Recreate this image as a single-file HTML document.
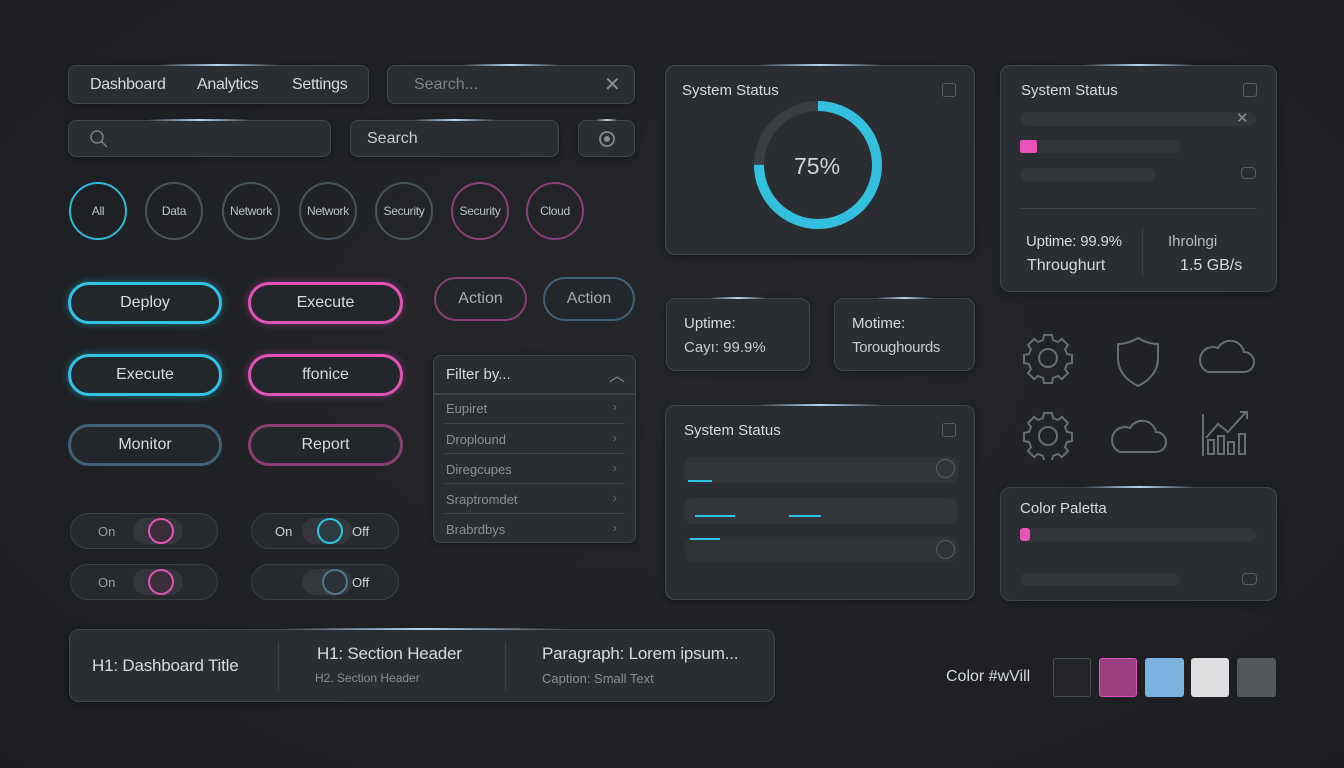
<!DOCTYPE html>
<html><head><meta charset="utf-8"><style>
*{box-sizing:border-box;margin:0;padding:0}
body{width:1344px;height:768px;background:radial-gradient(ellipse at 50% 45%,#25272b 0%,#1f2124 60%,#1b1d20 100%);font-family:"Liberation Sans",sans-serif;color:#d8dade;position:relative;overflow:hidden}
.a{position:absolute}
.p{position:absolute;background:#2a2d31;border:1.5px solid #42464c;border-radius:10px;box-shadow:0 2px 8px rgba(0,0,0,.35)}
.p::before{content:"";position:absolute;top:-2px;left:30%;width:40%;height:2px;background:linear-gradient(90deg,transparent,#b8d4ee,transparent);border-radius:2px}
.t{position:absolute;white-space:nowrap}
.c{position:absolute;width:58px;height:58px;border-radius:50%;border:2px solid #4a545c;display:flex;align-items:center;justify-content:center;font-size:12px;color:#bfc3c8;letter-spacing:-.3px}
.b{position:absolute;border-radius:22px;border:3px solid;display:flex;align-items:center;justify-content:center;font-size:16px;color:#d8dade;background:#23262b}
.cy{border-color:#2fc4e4;box-shadow:0 0 8px rgba(47,196,228,.45)}
.pk{border-color:#e053b9;box-shadow:0 0 8px rgba(224,83,185,.4)}
.dcy{border-color:#3f6277}
.dpk{border-color:#8a3f74}
.tg{position:absolute;width:148px;height:36px;border-radius:18px;background:#26292d;border:1.5px solid #3b3f44}
.bar{position:absolute;background:#32353a;border-radius:8px}
.row{position:absolute;left:10px;width:181px;height:30px;border-top:1px solid #3d4046;font-size:13px;color:#8c9096;padding:8px 0 0 2px}
.row span{position:absolute;right:8px;top:6px;color:#6c7076}
</style></head><body>

<!-- nav -->
<div class="p" style="left:68px;top:65px;width:301px;height:39px;border-radius:8px"></div>
<div class="t" style="left:90px;top:76px;font-size:16px;letter-spacing:-.3px">Dashboard</div>
<div class="t" style="left:197px;top:76px;font-size:16px;letter-spacing:-.3px">Analytics</div>
<div class="t" style="left:292px;top:76px;font-size:16px;letter-spacing:-.3px">Settings</div>
<div class="p" style="left:387px;top:65px;width:248px;height:39px;border-radius:8px"></div>
<div class="t" style="left:414px;top:76px;font-size:16px;color:#7e8288">Search...</div>
<div class="t" style="left:604px;top:72px;font-size:20px;color:#8a8e94">✕</div>

<div class="p" style="left:68px;top:120px;width:263px;height:37px;border-radius:8px"></div>
<svg class="a" style="left:89px;top:129px" width="20" height="20"><circle cx="8" cy="8" r="6" fill="none" stroke="#7a7e84" stroke-width="1.5"/><line x1="12.5" y1="12.5" x2="18" y2="18" stroke="#7a7e84" stroke-width="1.5"/></svg>
<div class="p" style="left:350px;top:120px;width:209px;height:37px;border-radius:8px"></div>
<div class="t" style="left:367px;top:130px;font-size:16px;color:#c8cbd0">Search</div>
<div class="p" style="left:578px;top:120px;width:57px;height:37px;border-radius:8px"></div>
<svg class="a" style="left:597px;top:129px" width="20" height="20"><circle cx="10" cy="10" r="7" fill="none" stroke="#868a90" stroke-width="1.8"/><circle cx="10" cy="10" r="3" fill="#868a90"/></svg>

<!-- circles -->
<div class="c" style="left:69px;top:182px;border-color:#2fb8d8">All</div>
<div class="c" style="left:145px;top:182px">Data</div>
<div class="c" style="left:222px;top:182px">Network</div>
<div class="c" style="left:299px;top:182px">Network</div>
<div class="c" style="left:375px;top:182px">Security</div>
<div class="c" style="left:451px;top:182px;border-color:#8a3f78">Security</div>
<div class="c" style="left:526px;top:182px;border-color:#8a3f78">Cloud</div>

<!-- buttons -->
<div class="b cy" style="left:68px;top:282px;width:154px;height:42px">Deploy</div>
<div class="b pk" style="left:248px;top:282px;width:155px;height:42px">Execute</div>
<div class="b dpk" style="left:434px;top:277px;width:93px;height:44px;color:#a8acb2;border-width:2px">Action</div>
<div class="b dcy" style="left:543px;top:277px;width:92px;height:44px;color:#a8acb2;border-width:2px">Action</div>
<div class="b cy" style="left:68px;top:354px;width:154px;height:42px">Execute</div>
<div class="b pk" style="left:248px;top:354px;width:155px;height:42px">ffonice</div>
<div class="b dcy" style="left:68px;top:424px;width:154px;height:42px">Monitor</div>
<div class="b dpk" style="left:248px;top:424px;width:155px;height:42px">Report</div>

<!-- filter -->
<div class="p" style="left:433px;top:355px;width:203px;height:188px;border-radius:8px;overflow:hidden">
<div class="t" style="left:12px;top:10px;font-size:15px;color:#d8dade">Filter by...</div>
<div class="t" style="right:10px;top:6px;font-size:16px;color:#8a8e94">︿</div>
<div class="a" style="left:0;right:0;top:37px;height:1.5px;background:#3d4046"></div>
<div class="row" style="top:37px;border-top:none">Eupiret<span>›</span></div>
<div class="row" style="top:67px">Droplound<span>›</span></div>
<div class="row" style="top:97px">Diregcupes<span>›</span></div>
<div class="row" style="top:127px">Sraptromdet<span>›</span></div>
<div class="row" style="top:157px">Brabrdbys<span>›</span></div>
</div>

<!-- toggles -->
<div class="tg" style="left:70px;top:513px"><div class="a" style="left:62px;top:4px;width:50px;height:26px;border-radius:13px;background:#33363b"></div><div class="t" style="left:27px;top:10px;font-size:13px;color:#9a9ea4">On</div><div class="a" style="left:77px;top:4px;width:26px;height:26px;border-radius:50%;border:2px solid #e053b9;background:#3a2e38"></div></div>
<div class="tg" style="left:251px;top:513px"><div class="a" style="left:50px;top:4px;width:50px;height:26px;border-radius:13px;background:#33363b"></div><div class="t" style="left:23px;top:10px;font-size:13px;color:#d0d3d7">On</div><div class="a" style="left:65px;top:4px;width:26px;height:26px;border-radius:50%;border:2px solid #2fc4e4;background:#2c3a42"></div><div class="t" style="left:100px;top:10px;font-size:13px;color:#d0d3d7">Off</div></div>
<div class="tg" style="left:70px;top:564px"><div class="a" style="left:62px;top:4px;width:50px;height:26px;border-radius:13px;background:#33363b"></div><div class="t" style="left:27px;top:10px;font-size:13px;color:#9a9ea4">On</div><div class="a" style="left:77px;top:4px;width:26px;height:26px;border-radius:50%;border:2px solid #e053b9;background:#3a2e38"></div></div>
<div class="tg" style="left:251px;top:564px"><div class="a" style="left:50px;top:4px;width:50px;height:26px;border-radius:13px;background:#33363b"></div><div class="a" style="left:70px;top:4px;width:26px;height:26px;border-radius:50%;border:2px solid #4a7a90;background:#2c3238"></div><div class="t" style="left:100px;top:10px;font-size:13px;color:#d0d3d7">Off</div></div>

<!-- typography -->
<div class="p" style="left:69px;top:629px;width:706px;height:73px"></div>
<div class="t" style="left:92px;top:656px;font-size:17px;letter-spacing:-.2px">H1: Dashboard Title</div>
<div class="a" style="left:278px;top:642px;width:1px;height:48px;background:#3d4046"></div>
<div class="t" style="left:317px;top:644px;font-size:17px;letter-spacing:-.2px">H1: Section Header</div>
<div class="t" style="left:315px;top:671px;font-size:12px;color:#8a8e94">H2. Section Header</div>
<div class="a" style="left:505px;top:642px;width:1px;height:48px;background:#3d4046"></div>
<div class="t" style="left:542px;top:644px;font-size:17px;letter-spacing:-.2px">Paragraph: Lorem ipsum...</div>
<div class="t" style="left:542px;top:671px;font-size:13px;color:#8a8e94">Caption: Small Text</div>

<!-- system status ring -->
<div class="p" style="left:665px;top:65px;width:310px;height:190px"></div>
<div class="t" style="left:682px;top:82px;font-size:15px">System Status</div>
<div class="a" style="left:942px;top:83px;width:14px;height:14px;border:1.5px solid #5a5e64;border-radius:3px"></div>
<svg class="a" style="left:752px;top:99px" width="132" height="132"><circle cx="66" cy="66" r="59" fill="none" stroke="#3a3d42" stroke-width="10"/><circle cx="66" cy="66" r="59" fill="none" stroke="#33c0df" stroke-width="10" stroke-dasharray="278 400" transform="rotate(-90 66 66)"/></svg>
<div class="t" style="left:794px;top:153px;font-size:23px;color:#d0d3d7">75%</div>

<!-- right card -->
<div class="p" style="left:1000px;top:65px;width:277px;height:227px"></div>
<div class="t" style="left:1021px;top:82px;font-size:15px">System Status</div>
<div class="a" style="left:1243px;top:83px;width:14px;height:14px;border:1.5px solid #5a5e64;border-radius:3px"></div>
<div class="bar" style="left:1020px;top:112px;width:236px;height:14px"></div>
<div class="t" style="left:1236px;top:109px;font-size:15px;color:#8a8e94">✕</div>
<div class="bar" style="left:1020px;top:140px;width:160px;height:13px"></div>
<div class="a" style="left:1020px;top:140px;width:17px;height:13px;background:#e653b9;border-radius:2px"></div>
<div class="bar" style="left:1020px;top:168px;width:136px;height:13px"></div>
<div class="a" style="left:1241px;top:167px;width:15px;height:12px;border:1.5px solid #5a5e64;border-radius:4px"></div>
<div class="a" style="left:1020px;top:208px;width:237px;height:1px;background:#3d4046"></div>
<div class="a" style="left:1142px;top:228px;width:1px;height:48px;background:#3d4046"></div>
<div class="t" style="left:1026px;top:233px;font-size:15px;letter-spacing:-.2px">Uptime: 99.9%</div>
<div class="t" style="left:1027px;top:257px;font-size:16px">Throughurt</div>
<div class="t" style="left:1168px;top:233px;font-size:15px;color:#b8bcc0">Ihrolngi</div>
<div class="t" style="left:1180px;top:257px;font-size:16px">1.5 GB/s</div>

<!-- small cards -->
<div class="p" style="left:666px;top:298px;width:144px;height:73px"></div>
<div class="t" style="left:684px;top:315px;font-size:15px">Uptime:</div>
<div class="t" style="left:684px;top:339px;font-size:15px;color:#c8cbd0">Cayı: 99.9%</div>
<div class="p" style="left:834px;top:298px;width:141px;height:73px"></div>
<div class="t" style="left:852px;top:315px;font-size:15px">Motime:</div>
<div class="t" style="left:852px;top:339px;font-size:15px;color:#c8cbd0;letter-spacing:-.3px">Toroughourds</div>

<!-- icons -->
<svg class="a" style="left:1020px;top:330px" width="260" height="130" fill="none" stroke="#6a6e74" stroke-width="2">
<g transform="translate(28,28)"><circle r="9"/><path d="M-4,-23 h8 l1,5 l5,2 l4,-3 l6,6 l-3,4 l2,5 l5,1 v8 l-5,1 l-2,5 l3,4 l-6,6 l-4,-3 l-5,2 l-1,5 h-8 l-1,-5 l-5,-2 l-4,3 l-6,-6 l3,-4 l-2,-5 l-5,-1 v-8 l5,-1 l2,-5 l-3,-4 l6,-6 l4,3 l5,-2 z"/></g>
<path d="M118,8 q10,6 20,6 v14 q0,18 -20,28 q-20,-10 -20,-28 v-14 q10,0 20,-6 z"/>
<path d="M188,42 h36 a10,10 0 0,0 0,-20 a14,14 0 0,0 -26,-4 a11,11 0 0,0 -10,24 z"/>
<g transform="translate(0,80)"><circle cx="28" cy="26" r="9"/><path transform="translate(28,26)" d="M-4,-23 h8 l1,5 l5,2 l4,-3 l6,6 l-3,4 l2,5 l5,1 v8 l-5,1 l-2,5 l3,4 l-6,6 l-4,-3 l-5,2 l-1,5 h-8 l-1,-5 l-5,-2 l-4,3 l-6,-6 l3,-4 l-2,-5 l-5,-1 v-8 l5,-1 l2,-5 l-3,-4 l6,-6 l4,3 l5,-2 z"/></g>
<path d="M100,122 h36 a10,10 0 0,0 0,-20 a14,14 0 0,0 -26,-4 a11,11 0 0,0 -10,24 z"/>
<path d="M183,84 v42 M188,124 v-14 h6 v14 z M198,124 v-18 h6 v18 z M208,124 v-12 h6 v12 z M219,124 v-20 h6 v20 z M186,108 l12,-14 l10,8 l18,-20 M220,82 h7 v7"/>
</svg>

<!-- system status 2 -->
<div class="p" style="left:665px;top:405px;width:310px;height:195px"></div>
<div class="t" style="left:684px;top:422px;font-size:15px">System Status</div>
<div class="a" style="left:942px;top:423px;width:14px;height:14px;border:1.5px solid #5a5e64;border-radius:3px"></div>
<div class="bar" style="left:685px;top:457px;width:273px;height:26px"></div>
<div class="a" style="left:936px;top:459px;width:19px;height:19px;border:1.5px solid #5a5e64;border-radius:50%"></div>
<div class="a" style="left:688px;top:480px;width:24px;height:2px;background:#2fc4e4"></div>
<div class="bar" style="left:685px;top:498px;width:273px;height:26px"></div>
<div class="a" style="left:695px;top:515px;width:40px;height:2px;background:#2fc4e4"></div>
<div class="a" style="left:789px;top:515px;width:32px;height:2px;background:#2fc4e4"></div>
<div class="bar" style="left:685px;top:537px;width:273px;height:25px;background:#2f3237"></div>
<div class="a" style="left:690px;top:538px;width:30px;height:2px;background:#2fc4e4"></div>
<div class="a" style="left:936px;top:540px;width:19px;height:19px;border:1.5px solid #5a5e64;border-radius:50%"></div>

<!-- color paletta -->
<div class="p" style="left:1000px;top:487px;width:277px;height:114px"></div>
<div class="t" style="left:1020px;top:500px;font-size:15px">Color Paletta</div>
<div class="bar" style="left:1020px;top:528px;width:237px;height:13px"></div>
<div class="a" style="left:1020px;top:528px;width:10px;height:13px;background:#e653b9;border-radius:3px"></div>
<div class="bar" style="left:1020px;top:573px;width:159px;height:13px"></div>
<div class="a" style="left:1242px;top:573px;width:15px;height:12px;border:1.5px solid #5a5e64;border-radius:4px"></div>

<!-- swatches -->
<div class="t" style="left:946px;top:668px;font-size:16px">Color #wVill</div>
<div class="a" style="left:1053px;top:658px;width:38px;height:39px;border:1.5px solid #4a4e54;border-radius:3px;background:#222428"></div>
<div class="a" style="left:1099px;top:658px;width:38px;height:39px;border:1.5px solid #e053b9;border-radius:3px;background:#9a3f7e"></div>
<div class="a" style="left:1145px;top:658px;width:39px;height:39px;border-radius:3px;background:#7ab2e0"></div>
<div class="a" style="left:1191px;top:658px;width:38px;height:39px;border-radius:3px;background:#dcdedf"></div>
<div class="a" style="left:1237px;top:658px;width:39px;height:39px;border-radius:3px;background:#54585e"></div>
</body></html>
